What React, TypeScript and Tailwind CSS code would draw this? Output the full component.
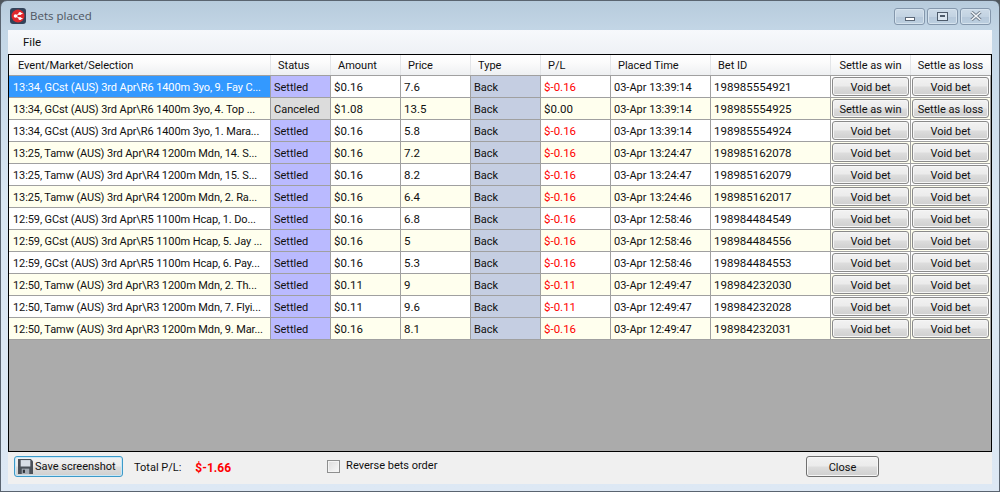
import React from 'react';

type Bet = {
    event: string;
    status: string;
    amount: string;
    price: string;
    pl: string;
    placed: string;
    id: string;
};

const bets: Bet[] = [
    { event: '13:34, GCst (AUS) 3rd Apr\\R6 1400m 3yo, 9. Fay C...', status: 'Settled', amount: '$0.16', price: '7.6', pl: '$-0.16', placed: '03-Apr 13:39:14', id: '198985554921' },
    { event: '13:34, GCst (AUS) 3rd Apr\\R6 1400m 3yo, 4. Top ...', status: 'Canceled', amount: '$1.08', price: '13.5', pl: '$0.00', placed: '03-Apr 13:39:14', id: '198985554925' },
    { event: '13:34, GCst (AUS) 3rd Apr\\R6 1400m 3yo, 1. Mara...', status: 'Settled', amount: '$0.16', price: '5.8', pl: '$-0.16', placed: '03-Apr 13:39:14', id: '198985554924' },
    { event: '13:25, Tamw (AUS) 3rd Apr\\R4 1200m Mdn, 14. S...', status: 'Settled', amount: '$0.16', price: '7.2', pl: '$-0.16', placed: '03-Apr 13:24:47', id: '198985162078' },
    { event: '13:25, Tamw (AUS) 3rd Apr\\R4 1200m Mdn, 15. S...', status: 'Settled', amount: '$0.16', price: '8.2', pl: '$-0.16', placed: '03-Apr 13:24:47', id: '198985162079' },
    { event: '13:25, Tamw (AUS) 3rd Apr\\R4 1200m Mdn, 2. Ra...', status: 'Settled', amount: '$0.16', price: '6.4', pl: '$-0.16', placed: '03-Apr 13:24:46', id: '198985162017' },
    { event: '12:59, GCst (AUS) 3rd Apr\\R5 1100m Hcap, 1. Do...', status: 'Settled', amount: '$0.16', price: '6.8', pl: '$-0.16', placed: '03-Apr 12:58:46', id: '198984484549' },
    { event: '12:59, GCst (AUS) 3rd Apr\\R5 1100m Hcap, 5. Jay ...', status: 'Settled', amount: '$0.16', price: '5', pl: '$-0.16', placed: '03-Apr 12:58:46', id: '198984484556' },
    { event: '12:59, GCst (AUS) 3rd Apr\\R5 1100m Hcap, 6. Pay...', status: 'Settled', amount: '$0.16', price: '5.3', pl: '$-0.16', placed: '03-Apr 12:58:46', id: '198984484553' },
    { event: '12:50, Tamw (AUS) 3rd Apr\\R3 1200m Mdn, 2. Th...', status: 'Settled', amount: '$0.11', price: '9', pl: '$-0.11', placed: '03-Apr 12:49:47', id: '198984232030' },
    { event: '12:50, Tamw (AUS) 3rd Apr\\R3 1200m Mdn, 7. Flyi...', status: 'Settled', amount: '$0.11', price: '9.6', pl: '$-0.11', placed: '03-Apr 12:49:47', id: '198984232028' },
    { event: '12:50, Tamw (AUS) 3rd Apr\\R3 1200m Mdn, 9. Mar...', status: 'Settled', amount: '$0.16', price: '8.1', pl: '$-0.16', placed: '03-Apr 12:49:47', id: '198984232031' },
];

const cols = 'grid grid-cols-[262px_60px_70px_70px_70px_70px_100px_120px_80px_80px]';
const headers = ['Event/Market/Selection', 'Status', 'Amount', 'Price', 'Type', 'P/L', 'Placed Time', 'Bet ID', 'Settle as win', 'Settle as loss'];

const Cell: React.FC<{ className?: string; children: React.ReactNode }> = ({ className = '', children }) => (
    <div className={`flex items-center pl-[3px] border-r border-b border-[#a0a0a0] whitespace-nowrap overflow-hidden ${className}`}>
        {children}
    </div>
);

const GridButton: React.FC<{ label: string }> = ({ label }) => (
    <div className="flex items-center justify-center border-r border-b border-[#a0a0a0] p-[1px]">
        <div className="w-full h-full flex items-center justify-center pt-[2px] rounded-[3px] border border-[#8a8a8a] bg-[linear-gradient(#f2f2f2_0%,#ebebeb_48%,#dddddd_52%,#cfcfcf_100%)] shadow-[inset_0_0_0_1px_#f6f6f6]">
            {label}
        </div>
    </div>
);

const WinButton: React.FC<{ className: string; children: React.ReactNode }> = ({ className, children }) => (
    <div className={`h-[17px] flex items-center justify-center rounded-[3px] border border-[#8497ac] bg-[linear-gradient(#cddbe8_0%,#c3d3e2_50%,#b6c8da_52%,#bccfe0_100%)] shadow-[inset_0_0_0_1px_#d6e3ee] ${className}`}>
        {children}
    </div>
);

export default function App() {
    return (
        <div className="w-[1000px] h-[492px] overflow-hidden bg-[#50565c] text-[11px] leading-[14px] text-[#101010] font-['Roboto','Liberation_Sans',sans-serif]">
            <div className="w-full h-full flex flex-col rounded-t-[7px] border border-[#5a6470] bg-[linear-gradient(#b7cbdc_0px,#c3d6e6_30px,#d9e6f2_200px,#dde8f4_100%)] px-[7px] pb-[7px]">
                {/* Title bar */}
                <div className="h-[29px] shrink-0 flex items-center justify-between pt-[1px]">
                    <div className="flex items-center gap-[4px] pl-[2px]">
                        <svg width="16" height="16" viewBox="0 0 16 16">
                            <rect x="0" y="0" width="16" height="16" rx="3" fill="#33435a" />
                            <circle cx="8" cy="8" r="6.5" fill="#e0282c" />
                            <circle cx="5.5" cy="8" r="1.8" fill="#fff" />
                            <circle cx="10" cy="5.5" r="1.6" fill="#fff" />
                            <circle cx="10" cy="10.5" r="1.6" fill="#fff" />
                            <path d="M5.5 8L10 5.5M5.5 8L10 10.5M10 5.5H12.5M10 10.5H12.5" stroke="#fff" strokeWidth="1" />
                        </svg>
                        <span className="text-[#4e5560] text-[11.5px] font-['Open_Sans',sans-serif] mt-[-1px]">Bets placed</span>
                    </div>
                    <div className="flex items-center gap-[2px] pr-[1px]">
                        <WinButton className="w-[31px]">
                            <div className="w-[10px] h-[4px] mt-[5px] bg-white border border-[#5c6878]" />
                        </WinButton>
                        <WinButton className="w-[31px]">
                            <div className="w-[11px] h-[9px] border border-[#4e5b6b] bg-[#dbe6f0] flex items-center justify-center">
                                <div className="w-[5px] h-[2px] bg-[#4e5b6b]" />
                            </div>
                        </WinButton>
                        <WinButton className="w-[31px]">
                            <svg width="12" height="10" viewBox="0 0 12 10">
                                <path d="M1.5 1L10.5 9M10.5 1L1.5 9" stroke="#6b7886" strokeWidth="3.2" />
                                <path d="M1.5 1L10.5 9M10.5 1L1.5 9" stroke="#f2f5f8" strokeWidth="1.6" />
                            </svg>
                        </WinButton>
                    </div>
                </div>

                {/* Client area */}
                <div className="flex-1 min-h-0 flex flex-col bg-[#f0f0f0]">
                    <div className="h-[24px] shrink-0 flex items-center pl-[15px] bg-[linear-gradient(#f7f9fc,#eef1f5)] text-[11.5px]">
                        File
                    </div>

                    <div className="h-[398px] shrink-0 flex flex-col border border-black bg-[#ababab]">
                        <div className={`${cols} h-[21px] shrink-0 bg-[linear-gradient(#ffffff_0%,#fbfbfb_40%,#eef0f2_100%)] border-b border-[#a0a0a0]`}>
                            {headers.map((h, i) => (
                                <div
                                    key={h}
                                    className={`flex items-center pt-[2px] border-r border-[#e3e5e8] whitespace-nowrap ${i === 0 ? 'pl-[9px]' : i < 8 ? 'pl-[7px]' : 'justify-center'}`}
                                >
                                    {h}
                                </div>
                            ))}
                        </div>
                        {bets.map((bet, i) => {
                            const rowBg = i % 2 === 0 ? 'bg-white' : 'bg-[#ffffee]';
                            const canceled = bet.status === 'Canceled';
                            return (
                                <div key={bet.id} className={`${cols} h-[22px] shrink-0 ${rowBg}`}>
                                    <Cell className={`pl-[4px] pt-[2px] tracking-[-0.1px] ${i === 0 ? 'bg-[#3399ff] text-white' : ''}`}>{bet.event}</Cell>
                                    <Cell className={`pt-[2px] ${canceled ? 'bg-[#dcdcdc]' : 'bg-[#baBaff]'}`}>{bet.status}</Cell>
                                    <Cell className="text-[11.5px]">{bet.amount}</Cell>
                                    <Cell className="text-[11.5px]">{bet.price}</Cell>
                                    <Cell className="pt-[2px] bg-[#c5cee2]">Back</Cell>
                                    <Cell className={bet.pl === '$0.00' ? 'text-[11.5px]' : 'text-[11.5px] text-[#ff0000]'}>{bet.pl}</Cell>
                                    <Cell className="pt-[2px]">{bet.placed}</Cell>
                                    <Cell className="text-[11.5px]">{bet.id}</Cell>
                                    <GridButton label={canceled ? 'Settle as win' : 'Void bet'} />
                                    <GridButton label={canceled ? 'Settle as loss' : 'Void bet'} />
                                </div>
                            );
                        })}
                    </div>

                    {/* Footer */}
                    <div className="flex-1 flex items-start pt-[4px] pl-[6px] pr-[113px]">
                        <div className="w-[109px] h-[21px] flex items-center gap-[2px] pl-[3px] whitespace-nowrap rounded-[3px] border border-[#3c9ac9] bg-[linear-gradient(#f2f2f2_0%,#ebebeb_48%,#dddddd_52%,#cfcfcf_100%)] shadow-[inset_0_0_0_1px_#c8e8f8]">
                            <svg width="15" height="15" viewBox="0 0 14 14" className="shrink-0">
                                <path d="M0 0H12L14 2V14H0Z" fill="#4a5058" />
                                <rect x="2.5" y="1" width="9" height="6" fill="#d8dee6" />
                                <rect x="3.5" y="9" width="7" height="5" fill="#a4abb4" />
                                <rect x="4.5" y="10" width="2" height="3" fill="#30343a" />
                            </svg>
                            <span>Save screenshot</span>
                        </div>
                        <span className="ml-[11px] mt-[5px] whitespace-nowrap">Total P/L:</span>
                        <span className="ml-[14px] mt-[5px] font-bold text-[#ff0000] text-[12px]">$-1.66</span>
                        <div className="ml-[96px] mt-[4px] w-[13px] h-[13px] border border-[#8e8f8f] bg-[linear-gradient(135deg,#dcdcdc,#f8f8f8)] shadow-[inset_0_0_0_1px_#f4f4f4]" />
                        <span className="ml-[6px] mt-[3px] whitespace-nowrap">Reverse bets order</span>
                        <div className="ml-auto w-[73px] h-[21px] flex items-center justify-center pt-[2px] rounded-[3px] border border-[#707070] bg-[linear-gradient(#f2f2f2_0%,#ebebeb_48%,#dddddd_52%,#cfcfcf_100%)] shadow-[inset_0_0_0_1px_#f6f6f6]">
                            Close
                        </div>
                    </div>
                </div>
            </div>
        </div>
    );
}
